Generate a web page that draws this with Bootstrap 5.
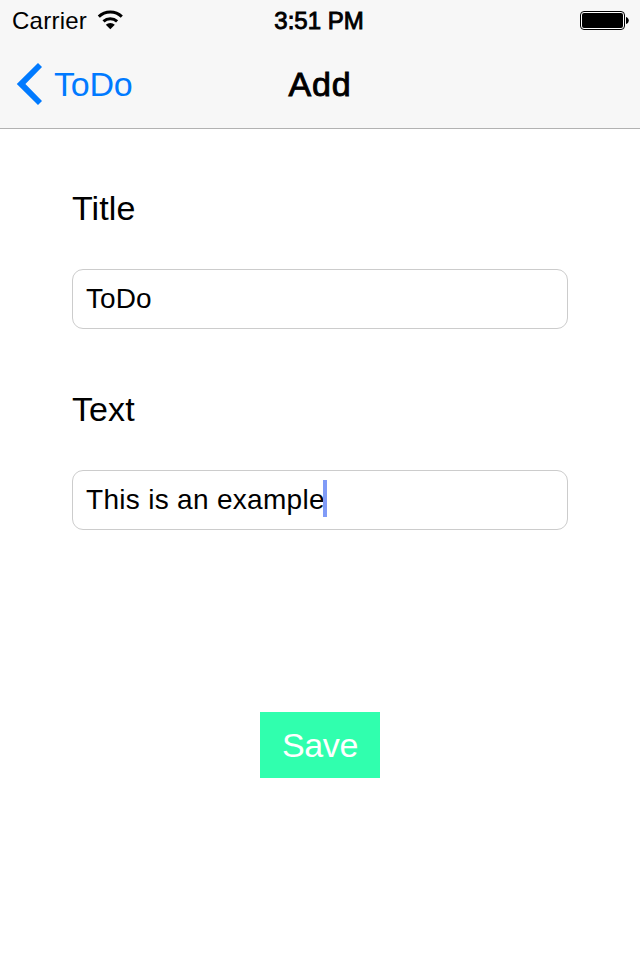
<!DOCTYPE html>
<html lang="en">
<head>
<meta charset="utf-8">
<meta name="viewport" content="width=device-width, initial-scale=1">
<title>Add</title>
<link href="https://cdn.jsdelivr.net/npm/bootstrap@5.3.0/dist/css/bootstrap.min.css" rel="stylesheet">
<style>
  body { font-family: "Liberation Sans", Arial, sans-serif; color: #000; background: #fff; min-height: 960px; }
  .top-area { background: #f7f7f7; border-bottom: 1px solid #b2b2b2; height: 129px; }
  .status-bar { height: 40px; font-size: 24px; line-height: 38px; padding: 0 11px 0 12px; }
  .status-bar .carrier, .status-bar .time { padding-top: 2px; }
  .status-bar .carrier { letter-spacing: .25px; }
  .status-bar .time { padding-right: 3px; }
  .semi { -webkit-text-stroke: .9px currentColor; }
  .title-bar { height: 88px; font-size: 34px; line-height: 88px; padding: 0 16px; }
  .title-bar .semi { letter-spacing: .8px; }
  .back-link, .back-link:hover { color: #007aff; letter-spacing: -.2px; }
  .back-link svg { margin-right: 12px; }
  .form-area { padding: 59px 72px 0; }
  .field-label { font-size: 34px; line-height: 40px; margin-bottom: 41px; letter-spacing: .1px; }
  .field-box, .field-box:focus { height: 60px; font-size: 28px; padding: 0 13px; border: 1px solid #ccc; border-radius: 11px; color: #000; box-shadow: none; letter-spacing: .1px; }
  .sentence, .sentence:focus { letter-spacing: .3px; }
  .second-field { margin-top: 60px; }
  .text-caret { left: 251px; top: 10px; width: 4px; height: 37px; background: #809bf7; }
  .save-btn, .save-btn:hover { width: 120px; height: 66px; margin-top: 182px; font-size: 34px; line-height: 66px; letter-spacing: -.4px; background: #30ffae; color: #fff; }
</style>
</head>
<body>
<header class="top-area">
  <div class="status-bar row g-0 align-items-center">
    <div class="col d-flex align-items-center">
      <span class="carrier">Carrier</span>
      <svg class="ms-2" width="30" height="22" viewBox="0 0 30 22" fill="none" stroke="#000" aria-label="Wi-Fi">
        <path d="M3.8 7.7A16.5 16.5 0 0 1 26.8 7.7" stroke-width="3"/>
        <path d="M8.5 12.3A10 10 0 0 1 22.1 12.3" stroke-width="3"/>
        <path d="M15.3 20.2L10.8 15.8A6.3 6.3 0 0 1 19.8 15.8Z" fill="#000" stroke="none"/>
      </svg>
    </div>
    <div class="col-auto semi time">3:51 PM</div>
    <div class="col d-flex justify-content-end">
      <svg width="49" height="19" viewBox="0 0 49 19" aria-label="Battery full">
        <rect x=".5" y=".5" width="44" height="18" rx="3.5" fill="#fff" stroke="#000"/>
        <rect x="2" y="2" width="41" height="15" rx="2" fill="#000"/>
        <path d="M46 6C49.7 7 49.7 12 46 13Z" fill="#000"/>
      </svg>
    </div>
  </div>
  <nav class="title-bar row g-0 align-items-center">
    <div class="col">
      <a href="#" class="back-link d-flex align-items-center text-decoration-none">
        <svg width="26" height="42" viewBox="0 0 26 42" fill="currentColor" aria-hidden="true"><path d="M22 0L26 4L9.4 21L26 38L22 42L.8 21Z"/></svg>ToDo
      </a>
    </div>
    <div class="col-auto semi">Add</div>
    <div class="col"></div>
  </nav>
</header>
<main>
  <form class="form-area">
    <label class="field-label d-block" for="title">Title</label>
    <input id="title" class="form-control field-box" type="text" value="ToDo">
    <div class="second-field">
      <label class="field-label d-block" for="text">Text</label>
      <div class="position-relative">
        <input id="text" class="form-control field-box sentence" type="text" value="This is an example">
        <span class="text-caret position-absolute"></span>
      </div>
    </div>
    <button type="button" class="save-btn btn d-block mx-auto p-0 border-0 rounded-0">Save</button>
  </form>
</main>
<script src="https://cdn.jsdelivr.net/npm/bootstrap@5.3.0/dist/js/bootstrap.bundle.min.js"></script>
</body>
</html>
